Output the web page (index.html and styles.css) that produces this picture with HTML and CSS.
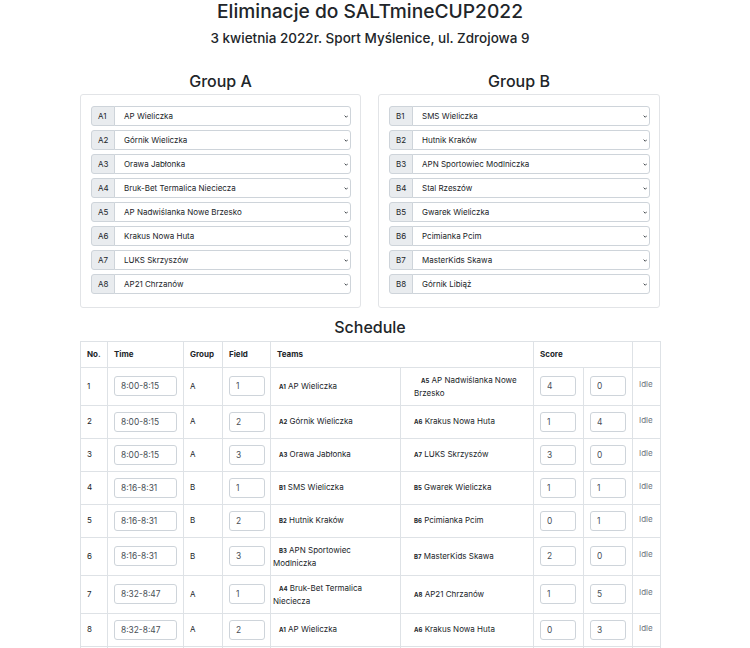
FILE: index.html
```html
<!DOCTYPE html>
<html lang="pl">
<head>
<meta charset="utf-8">
<title>Eliminacje do SALTmineCUP2022</title>
<link rel="stylesheet" href="styles.css">
</head>
<body>
<div class="page">
  <h1 class="title">Eliminacje do SALTmineCUP2022</h1>
  <h2 class="subtitle">3 kwietnia 2022r. Sport Myślenice, ul. Zdrojowa 9</h2>

  <div class="groups">
    <section class="group">
      <h3 class="heading">Group A</h3>
      <div class="card">
        <div class="igroup"><span class="ilabel">A1</span><div class="select"><span>AP Wieliczka</span><svg class="chev" viewBox="0 0 6 4"><polyline points="0.8,0.8 3,3 5.2,0.8"/></svg></div></div>
        <div class="igroup"><span class="ilabel">A2</span><div class="select"><span>Górnik Wieliczka</span><svg class="chev" viewBox="0 0 6 4"><polyline points="0.8,0.8 3,3 5.2,0.8"/></svg></div></div>
        <div class="igroup"><span class="ilabel">A3</span><div class="select"><span>Orawa Jabłonka</span><svg class="chev" viewBox="0 0 6 4"><polyline points="0.8,0.8 3,3 5.2,0.8"/></svg></div></div>
        <div class="igroup"><span class="ilabel">A4</span><div class="select"><span>Bruk-Bet Termalica Nieciecza</span><svg class="chev" viewBox="0 0 6 4"><polyline points="0.8,0.8 3,3 5.2,0.8"/></svg></div></div>
        <div class="igroup"><span class="ilabel">A5</span><div class="select"><span>AP Nadwiślanka Nowe Brzesko</span><svg class="chev" viewBox="0 0 6 4"><polyline points="0.8,0.8 3,3 5.2,0.8"/></svg></div></div>
        <div class="igroup"><span class="ilabel">A6</span><div class="select"><span>Krakus Nowa Huta</span><svg class="chev" viewBox="0 0 6 4"><polyline points="0.8,0.8 3,3 5.2,0.8"/></svg></div></div>
        <div class="igroup"><span class="ilabel">A7</span><div class="select"><span>LUKS Skrzyszów</span><svg class="chev" viewBox="0 0 6 4"><polyline points="0.8,0.8 3,3 5.2,0.8"/></svg></div></div>
        <div class="igroup"><span class="ilabel">A8</span><div class="select"><span>AP21 Chrzanów</span><svg class="chev" viewBox="0 0 6 4"><polyline points="0.8,0.8 3,3 5.2,0.8"/></svg></div></div>
      </div>
    </section>
    <section class="group">
      <h3 class="heading">Group B</h3>
      <div class="card">
        <div class="igroup"><span class="ilabel">B1</span><div class="select"><span>SMS Wieliczka</span><svg class="chev" viewBox="0 0 6 4"><polyline points="0.8,0.8 3,3 5.2,0.8"/></svg></div></div>
        <div class="igroup"><span class="ilabel">B2</span><div class="select"><span>Hutnik Kraków</span><svg class="chev" viewBox="0 0 6 4"><polyline points="0.8,0.8 3,3 5.2,0.8"/></svg></div></div>
        <div class="igroup"><span class="ilabel">B3</span><div class="select"><span>APN Sportowiec Modlniczka</span><svg class="chev" viewBox="0 0 6 4"><polyline points="0.8,0.8 3,3 5.2,0.8"/></svg></div></div>
        <div class="igroup"><span class="ilabel">B4</span><div class="select"><span>Stal Rzeszów</span><svg class="chev" viewBox="0 0 6 4"><polyline points="0.8,0.8 3,3 5.2,0.8"/></svg></div></div>
        <div class="igroup"><span class="ilabel">B5</span><div class="select"><span>Gwarek Wieliczka</span><svg class="chev" viewBox="0 0 6 4"><polyline points="0.8,0.8 3,3 5.2,0.8"/></svg></div></div>
        <div class="igroup"><span class="ilabel">B6</span><div class="select"><span>Pcimianka Pcim</span><svg class="chev" viewBox="0 0 6 4"><polyline points="0.8,0.8 3,3 5.2,0.8"/></svg></div></div>
        <div class="igroup"><span class="ilabel">B7</span><div class="select"><span>MasterKids Skawa</span><svg class="chev" viewBox="0 0 6 4"><polyline points="0.8,0.8 3,3 5.2,0.8"/></svg></div></div>
        <div class="igroup"><span class="ilabel">B8</span><div class="select"><span>Górnik Libiąż</span><svg class="chev" viewBox="0 0 6 4"><polyline points="0.8,0.8 3,3 5.2,0.8"/></svg></div></div>
      </div>
    </section>
  </div>

  <h3 class="heading schedule-heading">Schedule</h3>
  <table class="schedule">
    <colgroup>
      <col class="c-no"><col class="c-time"><col class="c-group"><col class="c-field"><col class="c-team1"><col class="c-team2"><col class="c-score"><col class="c-score2"><col class="c-status">
    </colgroup>
    <thead>
      <tr><th>No.</th><th>Time</th><th>Group</th><th>Field</th><th colspan="2">Teams</th><th colspan="2">Score</th><th></th></tr>
    </thead>
    <tbody>
      <tr><td>1</td><td><input class="fld fld-time" value="8:00-8:15"></td><td>A</td><td><input class="fld" value="1"></td><td class="team1"><span class="tag">A1</span> AP Wieliczka</td><td class="team2 ind"><span class="tag">A5</span> AP Nadwiślanka Nowe Brzesko</td><td><input class="fld" value="4"></td><td><input class="fld" value="0"></td><td class="status">Idle</td></tr>
      <tr><td>2</td><td><input class="fld fld-time" value="8:00-8:15"></td><td>A</td><td><input class="fld" value="2"></td><td class="team1"><span class="tag">A2</span> Górnik Wieliczka</td><td class="team2"><span class="tag">A6</span> Krakus Nowa Huta</td><td><input class="fld" value="1"></td><td><input class="fld" value="4"></td><td class="status">Idle</td></tr>
      <tr><td>3</td><td><input class="fld fld-time" value="8:00-8:15"></td><td>A</td><td><input class="fld" value="3"></td><td class="team1"><span class="tag">A3</span> Orawa Jabłonka</td><td class="team2"><span class="tag">A7</span> LUKS Skrzyszów</td><td><input class="fld" value="3"></td><td><input class="fld" value="0"></td><td class="status">Idle</td></tr>
      <tr><td>4</td><td><input class="fld fld-time" value="8:16-8:31"></td><td>B</td><td><input class="fld" value="1"></td><td class="team1"><span class="tag">B1</span> SMS Wieliczka</td><td class="team2"><span class="tag">B5</span> Gwarek Wieliczka</td><td><input class="fld" value="1"></td><td><input class="fld" value="1"></td><td class="status">Idle</td></tr>
      <tr><td>5</td><td><input class="fld fld-time" value="8:16-8:31"></td><td>B</td><td><input class="fld" value="2"></td><td class="team1"><span class="tag">B2</span> Hutnik Kraków</td><td class="team2"><span class="tag">B6</span> Pcimianka Pcim</td><td><input class="fld" value="0"></td><td><input class="fld" value="1"></td><td class="status">Idle</td></tr>
      <tr><td>6</td><td><input class="fld fld-time" value="8:16-8:31"></td><td>B</td><td><input class="fld" value="3"></td><td class="team1"><span class="tag">B3</span> APN Sportowiec Modlniczka</td><td class="team2"><span class="tag">B7</span> MasterKids Skawa</td><td><input class="fld" value="2"></td><td><input class="fld" value="0"></td><td class="status">Idle</td></tr>
      <tr><td>7</td><td><input class="fld fld-time" value="8:32-8:47"></td><td>A</td><td><input class="fld" value="1"></td><td class="team1"><span class="tag">A4</span> Bruk-Bet Termalica Nieciecza</td><td class="team2"><span class="tag">A8</span> AP21 Chrzanów</td><td><input class="fld" value="1"></td><td><input class="fld" value="5"></td><td class="status">Idle</td></tr>
      <tr><td>8</td><td><input class="fld fld-time" value="8:32-8:47"></td><td>A</td><td><input class="fld" value="2"></td><td class="team1"><span class="tag">A1</span> AP Wieliczka</td><td class="team2"><span class="tag">A6</span> Krakus Nowa Huta</td><td><input class="fld" value="0"></td><td><input class="fld" value="3"></td><td class="status">Idle</td></tr>
      <tr><td>9</td><td><input class="fld fld-time" value="8:32-8:47"></td><td>A</td><td><input class="fld" value="3"></td><td class="team1"><span class="tag">A2</span> Górnik Wieliczka</td><td class="team2"><span class="tag">A7</span> LUKS Skrzyszów</td><td><input class="fld" value="2"></td><td><input class="fld" value="2"></td><td class="status">Idle</td></tr>
    </tbody>
  </table>
</div>
</body>
</html>
```

FILE: styles.css
```css
html, body {
  margin: 0;
  padding: 0;
  background: #fff;
}
body {
  font-family: Inter, "Noto Sans", "Liberation Sans", sans-serif;
  color: #212529;
  font-size: 8px;
  line-height: 12.5px;
}
.page {
  width: 580px;
  margin-left: 80px;
}
.title {
  margin: 0;
  font-size: 19.2px;
  line-height: 22px;
  font-weight: 500;
  text-align: center;
}
.subtitle {
  margin: 7px 0 0;
  font-size: 13.5px;
  line-height: 18px;
  font-weight: 500;
  text-align: center;
}
.groups {
  display: grid;
  grid-template-columns: 281px 282px;
  column-gap: 17px;
  margin-top: 25px;
}
.heading {
  margin: 0;
  font-size: 16px;
  line-height: 19px;
  font-weight: 500;
  text-align: center;
}
.card {
  margin-top: 3px;
  border: 1px solid #e2e4e7;
  border-radius: 3px;
  padding: 11px 9px 13px 10px;
}
.igroup {
  display: flex;
  height: 20px;
  margin-bottom: 4px;
}
.igroup:last-child {
  margin-bottom: 0;
}
.ilabel {
  display: flex;
  align-items: center;
  box-sizing: border-box;
  width: 24px;
  padding-left: 6px;
  background: #e9ecef;
  border: 1px solid #ced4da;
  border-radius: 3px 0 0 3px;
  color: #212529;
}
.select {
  flex: 1;
  display: flex;
  align-items: center;
  justify-content: space-between;
  box-sizing: border-box;
  margin-left: -1px;
  padding: 0 2px 0 9px;
  border: 1px solid #ced4da;
  border-radius: 0 3px 3px 0;
  background: #fff;
  color: #212529;
}
.chev {
  width: 4.5px;
  height: 3px;
  fill: none;
  stroke: #343a40;
  stroke-width: 1.2;
}
.schedule-heading {
  margin-top: 10px;
}
.schedule {
  margin-top: 4px;
  width: 580px;
  table-layout: fixed;
  border-collapse: collapse;
}
.c-no { width: 27px; }
.c-time { width: 76px; }
.c-group { width: 39px; }
.c-field { width: 48px; }
.c-team1 { width: 130px; }
.c-team2 { width: 133px; }
.c-score { width: 50px; }
.c-score2 { width: 49px; }
.c-status { width: 28px; }
.schedule th,
.schedule td {
  border: 1px solid #dee2e6;
  padding: 6px;
  text-align: left;
  vertical-align: middle;
}
.schedule th {
  font-weight: 700;
}
.schedule td.team1,
.schedule td.team2 {
  line-height: 12px;
}
.fld {
  display: block;
  box-sizing: border-box;
  width: 36px;
  height: 20px;
  margin: 0;
  padding: 0 6px;
  border: 1px solid #ced4da;
  border-radius: 3px;
  font-family: inherit;
  font-size: 8.4px;
  color: #495057;
  background: #fff;
}
.fld-time {
  width: 63px;
}
.schedule td.team1 {
  padding-left: 2px;
  text-indent: 6px;
}
.schedule td.team2 {
  padding-left: 13px;
}
.schedule td.team2.ind {
  text-indent: 7px;
  padding-left: 13px;
}
.tag {
  font-size: 6px;
  font-weight: 700;
}
.schedule td.status {
  color: #6c757d;
  font-size: 8px;
  padding-bottom: 9px;
}
```
